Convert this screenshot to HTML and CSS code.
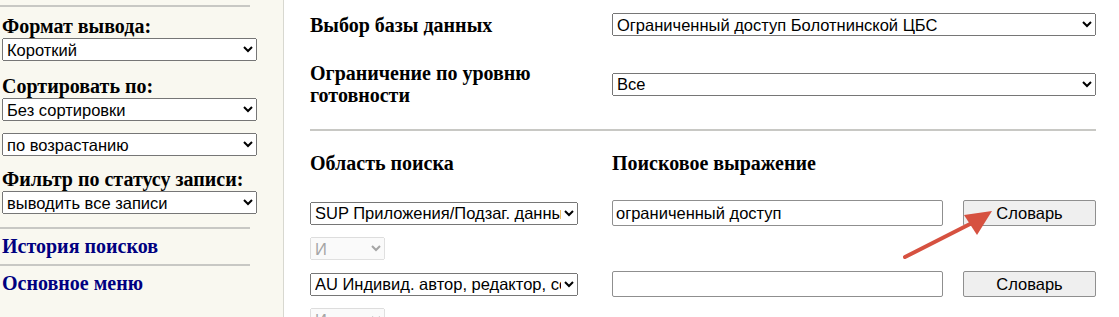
FILE: index.html
```html
<!doctype html>
<html>
    <head>
        <meta charset="utf-8" />
        <title>Поиск</title>
        <link rel="stylesheet" href="styles.css">
    </head>
    <body>
        <div class="page">
            <div class="side">
                <hr class="rule" />
                <div class="side_title first">Формат вывода:</div>
                <select class="side_select">
                    <option>Короткий</option>
                </select>
                <div class="side_title">Сортировать по:</div>
                <select class="side_select">
                    <option>Без сортировки</option>
                </select>
                <select class="side_select second">
                    <option>по возрастанию</option>
                </select>
                <div class="side_title third">Фильтр по статусу записи:</div>
                <select class="side_select">
                    <option>выводить все записи</option>
                </select>
                <hr class="rule lower" />
                <a class="side_link" href="#">История поисков</a>
                <hr class="rule between" />
                <a class="side_link" href="#">Основное меню</a>
            </div>
            <div class="main">
                <div class="row">
                    <div class="label">Выбор базы данных</div>
                    <select class="wide">
                        <option>Ограниченный доступ Болотнинской ЦБС</option>
                    </select>
                </div>
                <div class="row">
                    <div class="label">Ограничение по уровню<br />готовности</div>
                    <select class="wide">
                        <option>Все</option>
                    </select>
                </div>
                <hr class="main_rule" />
                <div class="query">
                    <div class="label">Область поиска</div>
                    <div class="label">Поисковое выражение</div>
                    <div></div>

                    <select class="field">
                        <option>SUP Приложения/Подзаг. данные</option>
                    </select>
                    <input class="term" type="text" value="ограниченный доступ" />
                    <button class="dict">Словарь</button>

                    <select class="logic" disabled>
                        <option>И</option>
                    </select>
                    <div></div>
                    <div></div>

                    <select class="field">
                        <option>AU Индивид. автор, редактор, составитель</option>
                    </select>
                    <input class="term" type="text" value="" />
                    <button class="dict">Словарь</button>

                    <select class="logic" disabled>
                        <option>И</option>
                    </select>
                </div>
                <svg class="arrow" width="120" height="65" viewBox="0 0 120 65">
                    <line x1="25" y1="57" x2="92" y2="23" stroke="#d65140" stroke-width="4" stroke-linecap="round" />
                    <polygon points="112,11 84,15 97,35" fill="#d65140" />
                </svg>
            </div>
        </div>
    </body>
</html>
```

FILE: styles.css
```css
body {
    margin: 0;
    font-family: "Liberation Serif", "Times New Roman", serif;
    background: #fff;
}
select,
input,
button {
    font-family: "Liberation Sans", Arial, sans-serif;
    font-size: 16.5px;
}
.page {
    display: flex;
    height: 317px;
    overflow: hidden;
}
.side {
    box-sizing: border-box;
    width: 284px;
    flex: none;
    background: #f9f8f0;
    border-right: 1px solid #d8d8d0;
    padding-left: 2px;
    display: flex;
    flex-direction: column;
    align-items: flex-start;
}
.rule {
    width: 250px;
    margin: 5px 0 0 -2px;
    border: 0;
    border-top: 2px solid #c8c8c4;
}
.rule.lower {
    margin-top: 13px;
}
.rule.between {
    margin-top: 6px;
}
.side_title {
    font-weight: bold;
    font-size: 20px;
    line-height: 23px;
    margin-top: 14px;
}
.side_title.first {
    margin-top: 8px;
}
.side_title.third {
    margin-top: 12px;
}
.side_select {
    width: 255px;
    height: 23px;
}
.side_select.second {
    margin-top: 12px;
}
.side_link {
    font-weight: bold;
    font-size: 20px;
    color: #000080;
    text-decoration: none;
    line-height: 23px;
    margin-top: 6px;
}
.main {
    position: relative;
    flex: 1;
    padding: 13px 22px 0 26px;
}
.row {
    display: grid;
    grid-template-columns: 302px 484px;
    align-items: center;
}
.row + .row {
    margin-top: 26px;
}
.label {
    font-weight: bold;
    font-size: 20px;
    line-height: 23px;
}
.row .label {
    line-height: 22px;
}
.wide {
    height: 23px;
}
.main_rule {
    width: 786px;
    margin: 23px 0 0;
    border: 0;
    border-top: 2px solid #c8c8c4;
}
.query {
    display: grid;
    grid-template-columns: 302px 351px 133px;
    align-items: center;
    row-gap: 11px;
    margin-top: 21px;
}
.query .label {
    margin-bottom: 14px;
}
.field {
    width: 268px;
    height: 23px;
}
.term {
    box-sizing: border-box;
    width: 331px;
    height: 26px;
    border: 1px solid #8f8f8f;
    border-radius: 2px;
    padding: 1px 3px;
}
.dict {
    height: 26px;
    width: 133px;
    background: #efefef;
    border: 1px solid #8f8f8f;
    border-radius: 2px;
}
.logic {
    width: 75px;
    height: 23px;
}
.arrow {
    position: absolute;
    left: 596px;
    top: 200px;
}
```
